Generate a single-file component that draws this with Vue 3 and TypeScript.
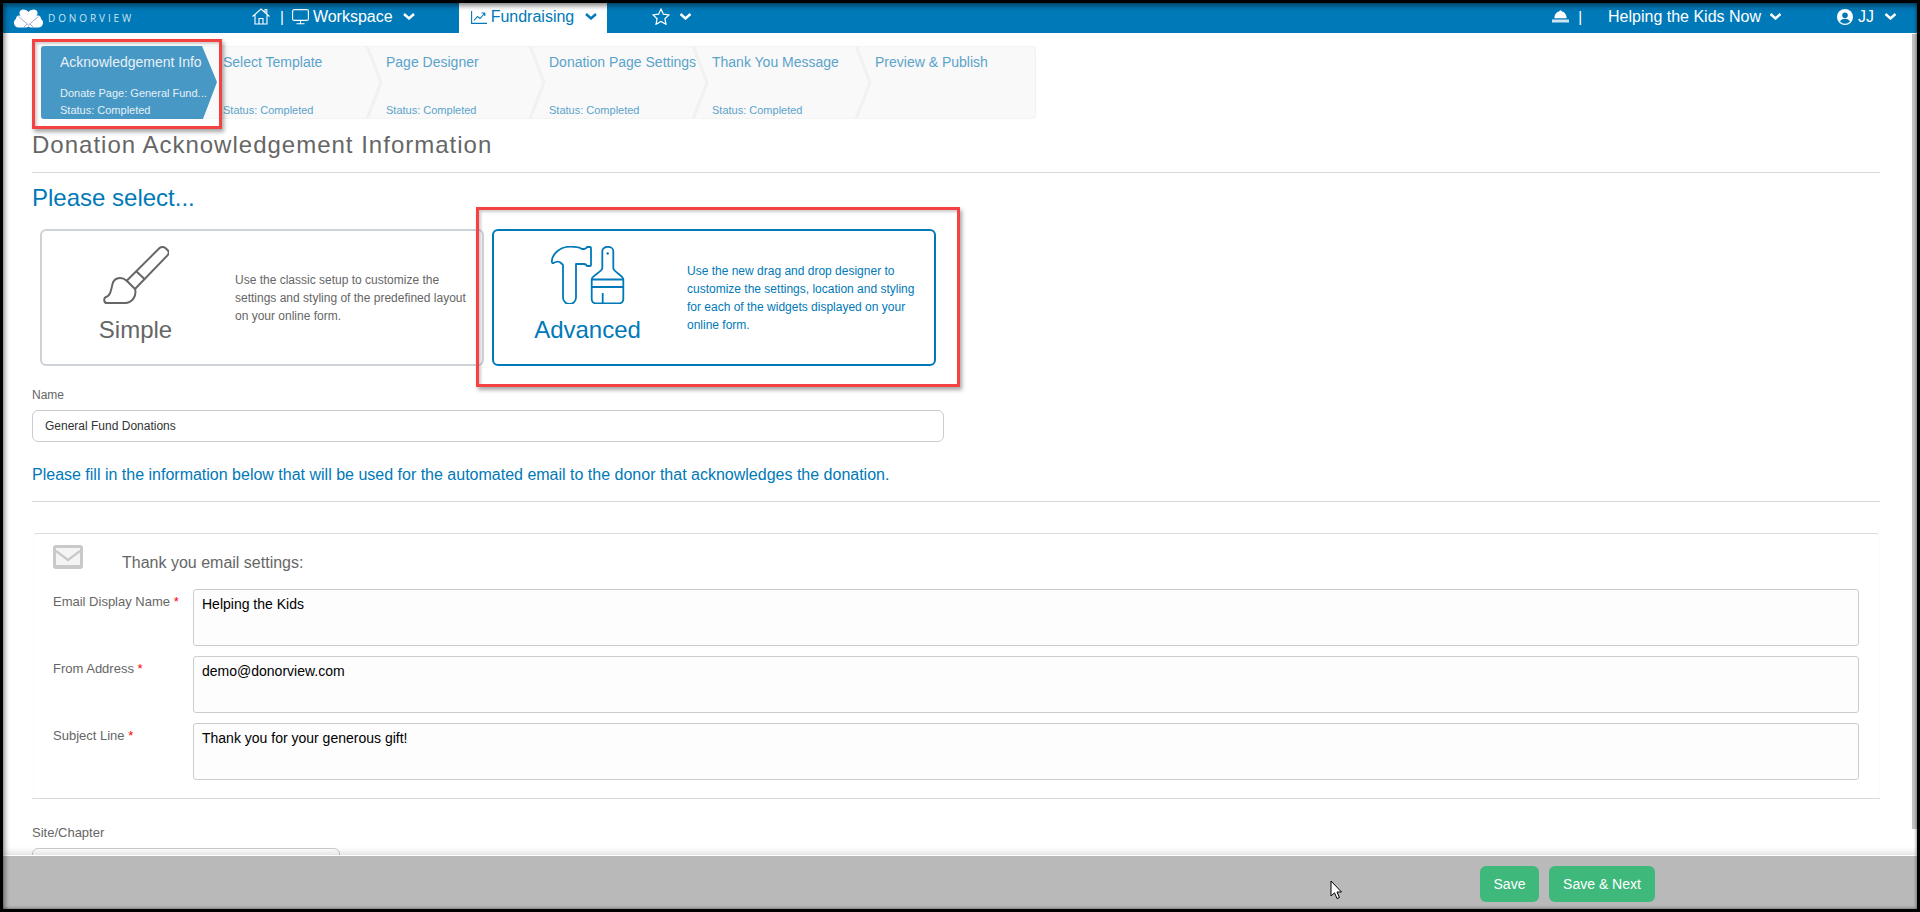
<script setup lang="ts">
interface Step {
  title: string
  status: string
}

const steps: Step[] = [
  { title: 'Select Template', status: 'Status: Completed' },
  { title: 'Page Designer', status: 'Status: Completed' },
  { title: 'Donation Page Settings', status: 'Status: Completed' },
  { title: 'Thank You Message', status: 'Status: Completed' },
  { title: 'Preview & Publish', status: '' },
]

interface Field {
  label: string
  value: string
}

const fields: Field[] = [
  { label: 'Email Display Name', value: 'Helping the Kids' },
  { label: 'From Address', value: 'demo@donorview.com' },
  { label: 'Subject Line', value: 'Thank you for your generous gift!' },
]
</script>

<template>
  <div class="frame">
    <div class="screen">
      <header class="topbar">
        <div class="brand">
          <svg class="logo" width="31" height="19" viewBox="0 0 31 19">
            <path d="M9 8C6 5 3 7 3 10 0 11 0 18 5 18.500H13C17 18 18 14 15 12Z" fill="#fff" />
            <path d="M22 8C25 5 28 7 28 10 31 11 31 18 26 18.500H18C14 18 13 14 16 12Z" fill="#fff" />
            <path d="M15.500 14C11 10 6 7 6.500 3.500 7 0 12-.5 15.500 3 19-.5 24 0 24.500 3.500 25 7 20 10 15.500 14Z" fill="#fff" />
            <path d="M5.500 7.500 15.500 16l10-8.500M14 15l-3.500 3.500M17 15l3.500 3.500" fill="none" stroke="#a9a9c8" stroke-width="1" />
          </svg>
          <span class="wordmark">DONORVIEW</span>
        </div>
        <svg class="ico-home" width="18" height="17" viewBox="0 0 18 17" fill="none" stroke="#fff" stroke-width="1.100">
          <path d="M.5 8.500 9 1l8.500 7.500M3 7v9h12V7M7 16v-5.500h4V16M13 4.500V1.500h1.800v4.500" />
        </svg>
        <span class="pipe">|</span>
        <svg class="ico-monitor" width="17" height="16" viewBox="0 0 17 16" fill="none" stroke="#fff" stroke-width="1.100">
          <rect x=".6" y=".6" width="15.800" height="10.800" rx="1.500" />
          <path d="M8.500 11.500v3M4.500 14.800h8" />
        </svg>
        <span class="nav-text nav-workspace">Workspace</span>
        <svg class="chev chev-workspace" width="12" height="7" viewBox="0 0 12 7"><path d="M1 1l5 4.500L11 1" /></svg>

        <div class="tab">
          <svg width="16" height="13" viewBox="0 0 16 13" fill="none" stroke="#0079b8" stroke-width="1.100">
            <path d="M.6 0v12.400H16M3 9.500l3.500-4 2.500 2 4.500-5M10.500 2h3.300v3" />
          </svg>
          <span class="nav-text tab-text">Fundraising</span>
          <svg class="chev chev-blue" width="12" height="7" viewBox="0 0 12 7"><path d="M1 1l5 4.500L11 1" /></svg>
        </div>

        <svg class="ico-star" width="18" height="17" viewBox="0 0 18 17" fill="none" stroke="#fff" stroke-width="1.200">
          <path d="M9 1l2.400 5.200 5.600.7-4.100 3.800 1.100 5.600L9 13.500l-5 2.800 1.100-5.600L1 6.900l5.600-.7Z" />
        </svg>
        <svg class="chev chev-star" width="13" height="7" viewBox="0 0 12 7"><path d="M1 1l5 4.500L11 1" /></svg>

        <div class="top-right">
          <svg width="17" height="13" viewBox="0 0 17 13">
            <path d="M7.500 1.200a1 1 0 0 1 2 0c3 .5 5 3 5.200 7H2.300c.2-4 2.200-6.500 5.200-7Z" fill="#fff" />
            <rect x="0" y="9.500" width="17" height="3" fill="#cfe4f0" />
          </svg>
          <span class="pipe pipe-right">|</span>
          <span class="nav-text org">Helping the Kids Now</span>
          <svg class="chev chev-org" width="13" height="7" viewBox="0 0 12 7"><path d="M1 1l5 4.500L11 1" /></svg>
          <svg class="ico-user" width="16" height="16" viewBox="0 0 16 16">
            <circle cx="8" cy="8" r="8" fill="#fff" />
            <circle cx="8" cy="6.200" r="2.800" fill="#0079b8" />
            <path d="M3 12.500c1-2 3-2.700 5-2.700s4 .7 5 2.700a6.500 6.500 0 0 1-10 0Z" fill="#0079b8" />
          </svg>
          <span class="nav-text user">JJ</span>
          <svg class="chev chev-user" width="13" height="7" viewBox="0 0 12 7"><path d="M1 1l5 4.500L11 1" /></svg>
        </div>
      </header>

      <main class="content">
        <nav class="steps">
          <div class="step step-active">
            <div class="step-active-shape">
              <span class="step-title">Acknowledgement Info</span>
              <span class="step-sub">Donate Page: General Fund...</span>
              <span class="step-status">Status: Completed</span>
            </div>
          </div>
          <div v-for="s in steps" :key="s.title" class="step">
            <span class="step-title">{{ s.title }}</span>
            <span class="step-status">{{ s.status }}</span>
            <svg v-if="s.status" class="step-sep" width="17" height="73" viewBox="0 0 17 73" fill="none" stroke="#f1f1f1" stroke-width="3">
              <path d="M1 0l14 36.500L1 73" />
            </svg>
          </div>
        </nav>

        <h1 class="page-title">Donation Acknowledgement Information</h1>
        <hr class="rule rule-title" />
        <h2 class="select-title">Please select...</h2>

        <div class="cards">
          <section class="card">
            <div class="card-left">
              <svg width="66" height="58" viewBox="0 0 66 58" fill="none" stroke="#666" stroke-width="2" stroke-linejoin="round">
                <path d="M23.700 34.700 56.300 2.300a4.500 4.500 0 0 1 6.400 0l2 2a3.500 3.500 0 0 1 0 4.800L32 43Z" />
                <path d="M33 25l9 8.500" />
                <path d="M23.700 34.700C18 30 11 32 9.500 38 8 45 7 50 3 51c-2.500.8-2.500 6 1 6h18c7 0 12-7 10-14" />
              </svg>
              <span class="card-name">Simple</span>
            </div>
            <p class="card-desc">Use the classic setup to customize the settings and styling of the predefined layout on your online form.</p>
          </section>
          <section class="card card-on">
            <div class="card-left">
              <svg width="74" height="58" viewBox="0 0 74 58" fill="none" stroke="#0079b8" stroke-width="1.800" stroke-linejoin="round">
                <path d="M12 19v32.500a6.500 6.500 0 0 0 13 0V18h8c1.500 0 2.500 1 3 2h3c.8 0 1-.5 1-1V2c0-.5-.2-1-1-1h-3c-.5 1-1.500 2-3 2h-2C29 1.500 25 .7 19 .7 9 .7 1 8 .8 15.500c0 1 .7 2 1.700 1.500C5 15.500 8 15 10 17c1 1 2 1.500 2 2Z" />
                <path d="M51.300 22.300V5c0-5.500 11-5.500 11 0v17.300c0 3.500 10 7 10 11V53a4 4 0 0 1-4 4.300H44.700a4 4 0 0 1-4-4.300V33.300c0-4 10.600-7.500 10.600-11Z" />
                <path d="M40.700 41h31.600" stroke-width="2.200" />
                <path d="M41 33.500h31M51.700 47v10" />
                <circle cx="56.700" cy="7.500" r="1.200" fill="#0079b8" stroke="none" />
              </svg>
              <span class="card-name">Advanced</span>
            </div>
            <p class="card-desc">Use the new drag and drop designer to customize the settings, location and styling for each of the widgets displayed on your online form.</p>
          </section>
        </div>

        <label class="field-label name-label" for="name-input">Name</label>
        <input id="name-input" class="name-input" type="text" value="General Fund Donations" />

        <p class="info">Please fill in the information below that will be used for the automated email to the donor that acknowledges the donation.</p>
        <hr class="rule rule-info" />

        <section class="panel">
          <div class="panel-head">
            <svg width="30" height="24" viewBox="0 0 30 24">
              <rect width="30" height="24" rx="3" fill="#c9c9c9" />
              <rect x="3" y="3" width="24" height="17" fill="#f4f4f4" />
              <path d="M3 6l12 9 12-9" fill="none" stroke="#c9c9c9" stroke-width="2.200" />
            </svg>
            <span class="panel-title">Thank you email settings:</span>
          </div>
          <div v-for="f in fields" :key="f.label" class="panel-row">
            <span class="row-label">{{ f.label }} <em class="req">*</em></span>
            <textarea class="row-input" readonly :value="f.value"></textarea>
          </div>
        </section>
        <hr class="rule rule-panel" />

        <label class="field-label site-label">Site/Chapter</label>
        <div class="site-select"></div>
      </main>

      <footer class="bottombar">
        <button class="btn btn-save" type="button">Save</button>
        <button class="btn btn-next" type="button">Save &amp; Next</button>
      </footer>

      <div class="scrollbar"></div>
      <div class="callout callout-step"></div>
      <div class="callout callout-card"></div>
      <svg class="cursor" width="12" height="20" viewBox="0 0 12 20">
        <path d="M1 1v15l3.500-3.200L7 18.500l2.400-1-2.400-5.500h4.500Z" fill="#fff" stroke="#000" stroke-width="1" stroke-linejoin="round" />
      </svg>
      <div class="edge"></div>
    </div>
  </div>
</template>

<style>
html,
body {
  margin: 0;
  background: #000;
}
</style>

<style scoped>
.frame {
  width: 1920px;
  height: 912px;
  box-sizing: border-box;
  padding: 3px;
  background: #000;
  font-family: "Liberation Sans", Arial, sans-serif;
  color: #666;
}
.screen {
  position: relative;
  height: 906px;
  background: #fff;
  display: flex;
  flex-direction: column;
  overflow: hidden;
}
.topbar {
  height: 30px;
  flex: none;
  background: #0079b8;
  display: flex;
  align-items: center;
  color: #fff;
}
.brand {
  width: 249px;
  flex: none;
  display: flex;
  align-items: center;
  padding-left: 10px;
  box-sizing: border-box;
}
.wordmark {
  margin-left: 4px;
  font-size: 10px;
  letter-spacing: 2.900px;
  color: #cfe4f0;
  font-family: "Open Sans", "Liberation Sans", sans-serif;
}
.ico-home {
  margin-top: -4px;
}
.pipe {
  margin-left: 10px;
  font-size: 15px;
  line-height: 30px;
  margin-top: -2px;
}
.ico-monitor {
  margin-left: 8px;
  margin-top: -3px;
}
.nav-text {
  font-size: 16px;
  line-height: 30px;
  margin-top: -3px;
  white-space: nowrap;
}
.nav-workspace {
  margin-left: 4px;
}
.chev {
  fill: none;
  stroke: #fff;
  stroke-width: 2.400;
  flex: none;
  margin-top: -3px;
}
.chev-blue {
  stroke: #0079b8;
  margin-left: 11px;
}
.chev-workspace {
  margin-left: 10px;
}
.tab {
  margin-left: 44px;
  width: 148px;
  height: 30px;
  box-sizing: border-box;
  padding-left: 12px;
  background: #fff;
  display: flex;
  align-items: center;
  color: #0079b8;
  flex: none;
}
.tab svg:first-child {
  margin-top: -2px;
}
.tab-text {
  margin-left: 4px;
}
.ico-star {
  margin-left: 45px;
  margin-top: -3px;
}
.chev-star {
  margin-left: 9px;
}
.top-right {
  margin-left: auto;
  display: flex;
  align-items: center;
  padding-right: 20px;
}
.top-right > svg:first-child {
  margin-top: -3px;
}
.pipe-right {
  margin-left: 9px;
}
.org {
  margin-left: 26px;
}
.chev-org {
  margin-left: 8px;
}
.ico-user {
  margin-left: 55px;
  margin-top: -3px;
}
.user {
  margin-left: 5px;
}
.chev-user {
  margin-left: 10px;
}
.content {
  flex: 1;
  min-height: 0;
  overflow: hidden;
  padding: 13px 37px 0 29px;
}
.steps {
  margin-left: 9px;
  width: 995px;
  height: 73px;
  box-sizing: border-box;
  background: #f9f9f9;
  border-radius: 4px;
  display: flex;
  box-shadow: inset 0 0 0 1px #f3f3f3;
}
.step {
  position: relative;
  width: 163px;
  flex: none;
  height: 73px;
  box-sizing: border-box;
  display: flex;
  flex-direction: column;
  padding-top: 8px;
}
.step-active {
  width: 182px;
  padding-top: 0;
}
.step-active-shape {
  width: 176px;
  height: 73px;
  box-sizing: border-box;
  padding: 8px 0 0 19px;
  background: #4798c5;
  border-radius: 3px 0 0 3px;
  clip-path: polygon(0 0, 161px 0, 176px 36px, 162px 73px, 0 73px);
  display: flex;
  flex-direction: column;
  color: #eaf3f8;
}
.step-title {
  font-size: 14px;
  line-height: 17px;
  color: #5aa3cb;
  white-space: nowrap;
}
.step-active-shape .step-title,
.step-active-shape .step-sub,
.step-active-shape .step-status {
  color: #e6f1f7;
}
.step-sub {
  margin-top: 15px;
  font-size: 11px;
  line-height: 14px;
  white-space: nowrap;
}
.step-status {
  margin-top: auto;
  margin-bottom: 2px;
  height: 14px;
  font-size: 11px;
  line-height: 14px;
  color: #5aa3cb;
  white-space: nowrap;
}
.step-active-shape .step-sub + .step-status {
  margin-top: 3px;
}
.step-sep {
  position: absolute;
  right: 3px;
  top: 0;
}
.page-title {
  margin: 11px 0 0;
  font-size: 24px;
  line-height: 30px;
  font-weight: 400;
  letter-spacing: 1px;
  color: #666;
  white-space: nowrap;
}
.rule {
  margin: 0;
  border: none;
  height: 1px;
  background: #d8d8d8;
}
.rule-title {
  margin-top: 12px;
}
.select-title {
  margin: 11px 0 0;
  font-size: 24px;
  line-height: 28px;
  font-weight: 400;
  color: #0079b8;
}
.cards {
  margin: 17px 0 0 8px;
  display: flex;
  gap: 8px;
}
.card {
  width: 444px;
  height: 137px;
  box-sizing: border-box;
  border: 2px solid #cdd2d8;
  border-radius: 6px;
  display: flex;
  align-items: center;
  background: #fff;
}
.card-on {
  border-color: #0079b8;
  color: #0079b8;
}
.card-left {
  width: 187px;
  flex: none;
  align-self: flex-start;
  padding-top: 15px;
  display: flex;
  flex-direction: column;
  align-items: center;
}
.card-name {
  margin-top: 11px;
  font-size: 24px;
  line-height: 30px;
}
.card-desc {
  margin: 0 0 0 6px;
  font-size: 12px;
  line-height: 18px;
  width: 240px;
}
.card-on .card-desc {
  margin-left: 6px;
  width: 238px;
}
.field-label {
  display: block;
  font-size: 12px;
  line-height: 14px;
}
.name-label {
  margin-top: 22px;
}
.name-input {
  display: block;
  margin-top: 8px;
  width: 912px;
  height: 32px;
  box-sizing: border-box;
  padding: 0 12px;
  border: 1px solid #ccc;
  border-radius: 6px;
  background: #fff;
  font: 12px "Liberation Sans", Arial, sans-serif;
  color: #333;
  outline: none;
}
.info {
  margin: 24px 0 0;
  font-size: 16px;
  line-height: 18px;
  color: #0079b8;
  white-space: nowrap;
}
.rule-info {
  margin-top: 17px;
}
.panel {
  margin: 31px 0 0 1px;
  padding: 0 20px 18px 19px;
  border-top: 1px solid #ddd;
  border-left: 1px solid #fbfbfb;
  border-right: 1px solid #fbfbfb;
  border-radius: 4px 4px 0 0;
}
.panel-head {
  height: 55px;
  box-sizing: border-box;
  padding-top: 11px;
  display: flex;
  align-items: flex-start;
}
.panel-title {
  margin: 9px 0 0 39px;
  font-size: 16px;
  line-height: 18px;
}
.panel-row {
  display: flex;
  margin-bottom: 10px;
}
.panel-row:last-child {
  margin-bottom: 0;
}
.row-label {
  width: 140px;
  flex: none;
  padding-top: 5px;
  font-size: 13px;
  line-height: 16px;
  font-weight: 400;
  white-space: nowrap;
}
.req {
  font-style: normal;
  color: #f00;
}
.row-input {
  display: block;
  flex: 1;
  height: 57px;
  box-sizing: border-box;
  margin: 0;
  padding: 5px 8px;
  border: 1px solid #ccc;
  border-radius: 3px;
  background: #fdfdfd;
  font: 14px/18px "Liberation Sans", Arial, sans-serif;
  color: #000;
  resize: none;
  outline: none;
  overflow: hidden;
}
.rule-panel {
  background: #d8d8d8;
}
.site-label {
  margin-top: 27px;
  font-size: 13px;
}
.site-select {
  margin-top: 8px;
  width: 308px;
  height: 34px;
  box-sizing: border-box;
  border: 1px solid #ccc;
  border-radius: 6px;
}
.bottombar {
  flex: none;
  height: 54px;
  box-sizing: border-box;
  border-top: 1px solid #fff;
  background: #b9b9b9;
  box-shadow: 0 -3px 6px rgba(0, 0, 0, 0.12);
  padding: 10px 262px 0 0;
  display: flex;
  justify-content: flex-end;
  align-items: flex-start;
  gap: 10px;
  position: relative;
}
.btn {
  height: 36px;
  border: none;
  border-radius: 6px;
  background: #3eb87b;
  color: #fff;
  font: 14px "Liberation Sans", Arial, sans-serif;
  padding: 0;
}
.btn-save {
  width: 59px;
}
.btn-next {
  width: 106px;
}
.scrollbar {
  position: absolute;
  top: 31px;
  right: 0;
  width: 5px;
  height: 795px;
  background: #c4c4c4;
}
.callout {
  position: absolute;
  box-sizing: border-box;
  border: 3px solid #f44141;
  box-shadow: 2px 3px 4px rgba(0, 0, 0, 0.35), inset 2px 2px 3px rgba(0, 0, 0, 0.2);
  pointer-events: none;
}
.callout-step {
  left: 29px;
  top: 36px;
  width: 190px;
  height: 90px;
}
.callout-card {
  left: 473px;
  top: 204px;
  width: 484px;
  height: 180px;
}
.cursor {
  position: absolute;
  left: 1327px;
  top: 877px;
}
.edge {
  position: absolute;
  inset: 0;
  box-shadow: inset 2px 3px 5px rgba(0, 0, 0, 0.45), inset -1px -1px 3px rgba(0, 0, 0, 0.3);
  pointer-events: none;
}
</style>
